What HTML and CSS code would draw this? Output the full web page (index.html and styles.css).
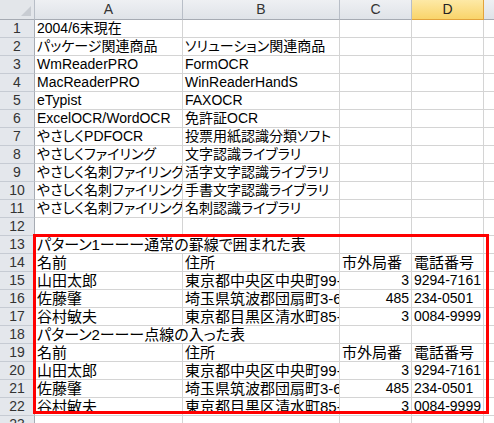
FILE: index.html
```html
<!DOCTYPE html>
<html lang="ja">
<head>
<meta charset="utf-8">
<link rel="stylesheet" href="styles.css">
</head>
<body>
<div class="sheet">
<table class="grid">
<colgroup>
<col class="c-h"><col class="c-a"><col class="c-b"><col class="c-c"><col class="c-d"><col class="c-e">
</colgroup>
<thead>
<tr><th class="corner"><span class="tri"></span></th><th class="colh">A</th><th class="colh">B</th><th class="colh">C</th><th class="colh sel">D</th><th class="colh last"></th></tr>
</thead>
<tbody>
<tr><th>1</th><td>2004/6末現在</td><td></td><td></td><td></td><td></td></tr>
<tr><th>2</th><td>パッケージ関連商品</td><td>ソリューション関連商品</td><td></td><td></td><td></td></tr>
<tr><th>3</th><td>WmReaderPRO</td><td>FormOCR</td><td></td><td></td><td></td></tr>
<tr><th>4</th><td>MacReaderPRO</td><td>WinReaderHandS</td><td></td><td></td><td></td></tr>
<tr><th>5</th><td>eTypist</td><td>FAXOCR</td><td></td><td></td><td></td></tr>
<tr><th>6</th><td>ExcelOCR/WordOCR</td><td>免許証OCR</td><td></td><td></td><td></td></tr>
<tr><th>7</th><td>やさしくPDFOCR</td><td>投票用紙認識分類ソフト</td><td></td><td></td><td></td></tr>
<tr><th>8</th><td>やさしくファイリング</td><td>文字認識ライブラリ</td><td></td><td></td><td></td></tr>
<tr><th>9</th><td>やさしく名刺ファイリング</td><td>活字文字認識ライブラリ</td><td></td><td></td><td></td></tr>
<tr><th>10</th><td>やさしく名刺ファイリング</td><td>手書文字認識ライブラリ</td><td></td><td></td><td></td></tr>
<tr><th>11</th><td>やさしく名刺ファイリング</td><td>名刺認識ライブラリ</td><td></td><td></td><td></td></tr>
<tr><th>12</th><td></td><td></td><td></td><td></td><td></td></tr>
<tr class="big"><th>13</th><td colspan="2">パターン1ーーー通常の罫線で囲まれた表</td><td></td><td></td><td></td></tr>
<tr class="big"><th>14</th><td>名前</td><td>住所</td><td>市外局番</td><td>電話番号</td><td></td></tr>
<tr class="big"><th>15</th><td>山田太郎</td><td>東京都中央区中央町99-1</td><td class="num">3</td><td class="tel">9294-7161</td><td></td></tr>
<tr class="big"><th>16</th><td>佐藤肇</td><td>埼玉県筑波郡団扇町3-6</td><td class="num">485</td><td class="tel">234-0501</td><td></td></tr>
<tr class="big"><th>17</th><td>谷村敏夫</td><td>東京都目黒区清水町85-2</td><td class="num">3</td><td class="tel">0084-9999</td><td></td></tr>
<tr class="big"><th>18</th><td colspan="2">パターン2ーーー点線の入った表</td><td></td><td></td><td></td></tr>
<tr class="big"><th>19</th><td>名前</td><td>住所</td><td>市外局番</td><td>電話番号</td><td></td></tr>
<tr class="big"><th>20</th><td>山田太郎</td><td>東京都中央区中央町99-1</td><td class="num">3</td><td class="tel">9294-7161</td><td></td></tr>
<tr class="big"><th>21</th><td>佐藤肇</td><td>埼玉県筑波郡団扇町3-6</td><td class="num">485</td><td class="tel">234-0501</td><td></td></tr>
<tr class="big"><th>22</th><td>谷村敏夫</td><td>東京都目黒区清水町85-2</td><td class="num">3</td><td class="tel">0084-9999</td><td></td></tr>
<tr><th>23</th><td></td><td></td><td></td><td></td><td></td></tr>
</tbody>
</table>
<div class="redbox"></div>
</div>
</body>
</html>
```
FILE: styles.css
```css
html, body {
  margin: 0;
  padding: 0;
  background: #ffffff;
}
.sheet {
  position: relative;
  width: 494px;
  height: 423px;
  overflow: hidden;
}
.grid {
  table-layout: fixed;
  border-collapse: separate;
  border-spacing: 0;
  width: 537px;
  font-family: "Liberation Sans", "Noto Sans CJK JP", sans-serif;
  font-feature-settings: "palt";
  font-size: 14px;
  color: #000;
}
.c-h { width: 35px; }
.c-a { width: 148px; }
.c-b { width: 157px; }
.c-c { width: 72px; }
.c-d { width: 72px; }
.c-e { width: 53px; }

.grid thead th {
  height: 19px;
  padding: 0;
  border-right: 1px solid #b8bec7;
  border-bottom: 1px solid #a6abb3;
  background: linear-gradient(#eef0f3, #dfe3e8);
  font-family: "Liberation Sans", sans-serif;
  font-weight: normal;
  font-size: 14px;
  color: #333;
  line-height: 19px;
  text-align: center;
}
.grid thead th.sel {
  background: linear-gradient(#fde9a6, #f9d46a);
  border-bottom-color: #e2a33c;
  border-right-color: #e2a33c;
  color: #222;
}
.grid thead th.corner {
  position: relative;
  background: #e3e6ea;
}
.tri {
  position: absolute;
  right: 3px;
  bottom: 3px;
  width: 0;
  height: 0;
  border-left: 10px solid transparent;
  border-bottom: 10px solid #c8ccd2;
}
.grid tbody th {
  height: 17px;
  padding: 0;
  border-right: 1px solid #a6abb3;
  border-bottom: 1px solid #c6cbd3;
  background: #e4e7ec;
  font-family: "Liberation Sans", sans-serif;
  font-weight: normal;
  font-size: 14px;
  color: #333;
  line-height: 17px;
  text-align: center;
}
.grid td {
  height: 17px;
  padding: 0 1px 0 2px;
  border-right: 1px solid #d4d4d4;
  border-bottom: 1px solid #d4d4d4;
  white-space: nowrap;
  overflow: hidden;
  line-height: 17px;
  vertical-align: bottom;
}
.grid tr.big td {
  font-size: 15px;
}
.grid tr.big td.tel,
.grid tr.big td.num {
  font-size: 14px;
}
.grid td.num {
  text-align: right;
  padding-right: 2px;
}
.redbox {
  position: absolute;
  left: 33px;
  top: 234px;
  width: 450px;
  height: 174px;
  border: 3px solid #ff0000;
}
```
